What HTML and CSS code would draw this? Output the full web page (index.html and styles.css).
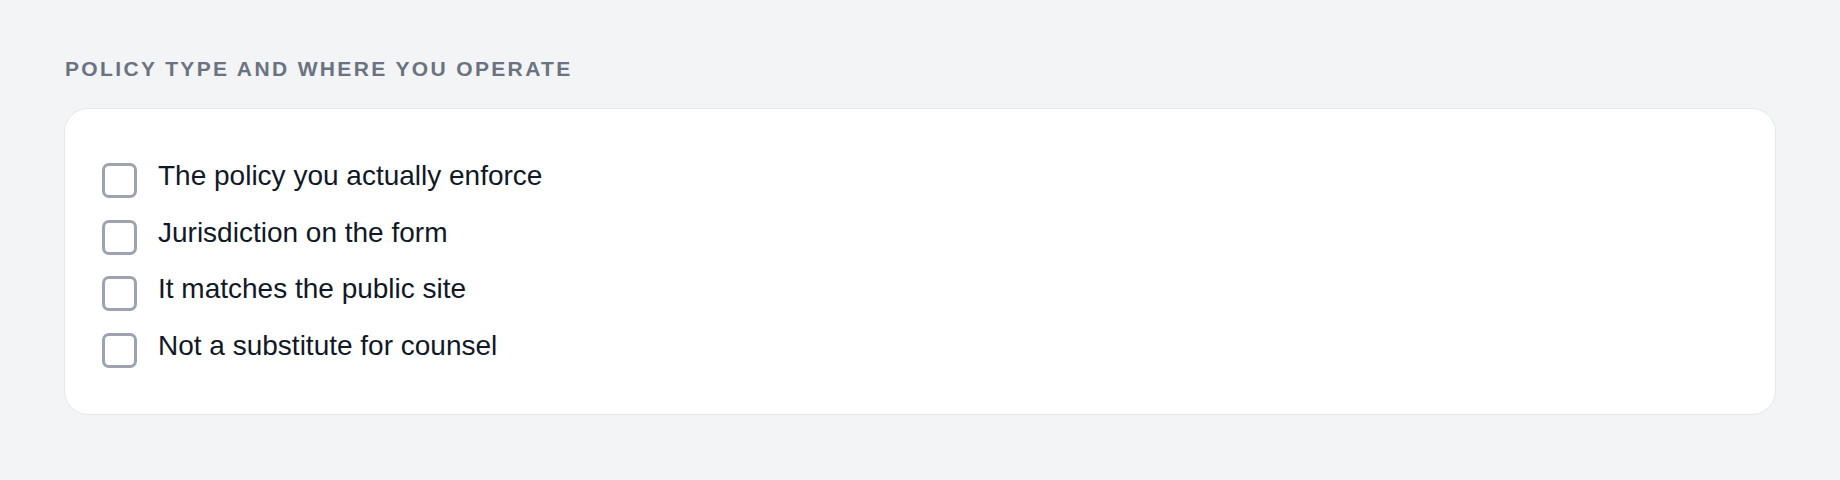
FILE: index.html
```html
<!DOCTYPE html>
<html lang="en">
<head>
<meta charset="utf-8">
<title>Policy type and where you operate</title>
<link rel="stylesheet" href="styles.css">
</head>
<body>
<main class="page">
  <h2 class="section-title">Policy type and where you operate</h2>
  <section class="card">
    <ul class="check-list">
      <li class="check-item"><span class="box"></span><span class="label">The policy you actually enforce</span></li>
      <li class="check-item"><span class="box"></span><span class="label">Jurisdiction on the form</span></li>
      <li class="check-item"><span class="box"></span><span class="label">It matches the public site</span></li>
      <li class="check-item"><span class="box"></span><span class="label">Not a substitute for counsel</span></li>
    </ul>
  </section>
</main>
</body>
</html>
```

FILE: styles.css
```css
html, body {
  margin: 0;
  padding: 0;
  background: #f3f4f6;
}
body {
  font-family: "Liberation Sans", Arial, sans-serif;
  width: 1840px;
  height: 480px;
  overflow: hidden;
}
.page {
  padding: 55px 64px 0 64px;
}
.section-title {
  margin: 0 0 25px 1px;
  font-size: 21px;
  line-height: 28px;
  font-weight: 700;
  letter-spacing: 2.36px;
  text-transform: uppercase;
  color: #6b7280;
}
.card {
  background: #ffffff;
  border: 1px solid #e5e7eb;
  border-radius: 24px;
  padding: 47px 38px 46px 37px;
}
.check-list {
  list-style: none;
  margin: 0;
  padding: 0;
  display: flex;
  flex-direction: column;
  gap: 14.5px;
}
.check-item {
  display: flex;
  align-items: flex-start;
  gap: 21px;
  height: 42px;
}
.box {
  flex: none;
  width: 35px;
  height: 35px;
  margin-top: 7px;
  box-sizing: border-box;
  border: 3px solid #9ca3af;
  border-radius: 7px;
  background: #ffffff;
}
.label {
  font-size: 28px;
  line-height: 40px;
  color: #111827;
}
```
